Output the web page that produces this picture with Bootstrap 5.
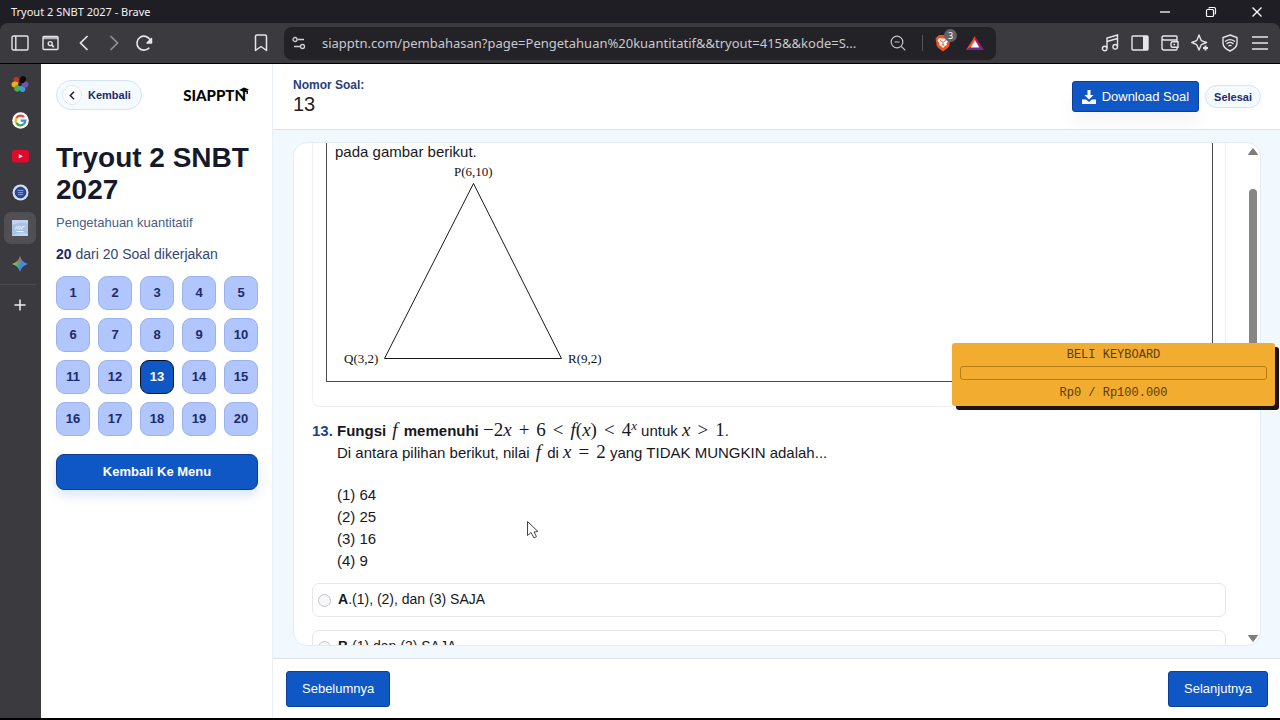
<!DOCTYPE html>
<html lang="id">
<head>
<meta charset="utf-8">
<meta name="viewport" content="width=device-width, initial-scale=1">
<title>Tryout 2 SNBT 2027</title>
<link href="https://cdn.jsdelivr.net/npm/bootstrap@5.3.0/dist/css/bootstrap.min.css" rel="stylesheet">
<style>
:root { --blue:#0f57c4; --navy:#1c2b6b; --line:#d9e2ee; }
body { font-family:"Liberation Sans",Arial,sans-serif; font-size:15px; line-height:22px; color:#16181d; background:#000; overflow:hidden; }
button { font-family:inherit; }
svg { display:block; flex:none; }
.os-font { font-family:"Noto Sans","Open Sans",sans-serif; }
.screen { padding-bottom:2px; }

/* browser chrome */
.titlebar { height:23px; background:#1f1e24; color:#f2f2f4; font-size:11px; line-height:23px; padding-left:11px; }
.win-btn { width:46px; height:23px; background:none; border:0; color:#fff; padding:0; }
.toolbar { height:40px; background:#3b3a3f; color:#e6e6ea; border-radius:8px 8px 0 0; }
.toolbar-wrap { background:#1f1e24; border-bottom:1px solid #000; }
.tool { width:30px; height:30px; border:0; padding:0; background:none; color:inherit; display:flex; align-items:center; justify-content:center; flex:none; }
.tools-start { width:276px; padding-left:5px; }
.tools-end { width:284px; padding-right:5px; }
.address { height:33px; background:#232227; border-radius:8px; padding:0 6px 0 8px; }
.address input { background:none; border:0; color:#c9c9cd; font-size:13px; min-width:0; padding:0; outline:0; text-overflow:ellipsis; }
.sep { width:1px; height:16px; background:#55545a; margin:0 5px 0 16px; }
.shield { margin-right:2px; }
.shield-count { top:1px; right:1px; width:13px; height:13px; border-radius:50%; background:#626268; color:#fff; font-size:9px; line-height:13px; }
.rail { width:41px; background:#3b3a3f; padding-top:2px; flex:none; }
.rail-btn { width:32px; height:32px; margin:2px 0 2px 4px; border:0; border-radius:7px; padding:0; background:none; display:flex; align-items:center; justify-content:center; color:#eee; flex:none; }
.rail-btn.active { background:#504f54; }
.rail-line { height:1px; background:#4b4a4f; margin:2px 5px 2px 0; }

/* sidebar */
.side { width:232px; background:#fff; border-right:1px solid #eaf0f6; padding:16px 14px 0 15px; flex:none; }
.pill { border:1px solid #d3e3f4; background:#f5faff; border-radius:20px; color:var(--navy); font-size:11px; font-weight:700; line-height:16px; }
.pill-back { height:30px; padding:0 10px 0 5px; gap:6px; }
.pill-dot { width:20px; height:20px; border-radius:50%; border:1px solid #dfe8f2; background:#fff; display:flex; align-items:center; justify-content:center; }
.brand-word { font-family:Lato,sans-serif; font-weight:900; font-size:15px; line-height:20px; color:#050505; }
.brand-cap { top:2px; right:-3px; }
.side h1 { font-size:28px; line-height:32px; font-weight:700; color:#15192a; margin:32px 0 0; }
.subtitle { font-size:13px; line-height:18px; color:#46608a; margin:8px 0 0; }
.progress-note { font-size:14px; line-height:20px; color:#34476e; margin:12px 0 12px; }
.progress-note b { color:var(--navy); }
.num-grid { display:grid; grid-template-columns:repeat(5,1fr); gap:8px; }
.num { height:34px; border:1px solid #9ab3ee; border-radius:9px; background:#b0c6fc; color:var(--navy); font-size:13px; font-weight:700; line-height:16px; padding:0; }
.num.active { background:var(--blue); border-color:#02102e; color:#fff; }
.btn-site { --bs-btn-bg:var(--blue); --bs-btn-color:#fff; --bs-btn-border-color:#0b3f9b; --bs-btn-hover-bg:#0b4bac; --bs-btn-hover-color:#fff; --bs-btn-font-size:13px; --bs-btn-border-radius:3px; --bs-btn-padding-x:15px; --bs-btn-padding-y:0; height:36px; }
.btn-menu { --bs-btn-border-radius:8px; margin-top:18px; font-weight:700; box-shadow:0 5px 12px rgba(15,87,196,.16); }

/* question area */
.top { height:66px; background:#fff; border-bottom:1px solid var(--line); padding:0 19px 0 20px; }
.top-label { font-size:12px; line-height:14px; font-weight:700; color:#27407c; }
.top-num { font-size:20px; line-height:24px; color:#222; }
.top-actions, .btn-save { gap:6px; }
.btn-save { height:31px; --bs-btn-padding-x:9px; box-shadow:0 12px 18px rgba(0,0,0,.04); }
.pill-done { height:23px; padding:0 8px; }
.stage { background:#f1f8fe; padding:12px 19px 12px 20px; min-height:0; }
.sheet { background:#fff; border:1px solid #e3edf6; border-radius:14px; overflow:hidden; height:100%; }
.sheet-body { padding:0 20px 0 18px; min-width:0; overflow:hidden; }
.passage { border:1px solid #edf0f4; border-top:0; border-radius:0 0 8px 8px; padding:0 12px 24px 13px; }
.passage-frame { border:1px solid #4a4a4a; border-top:0; padding-left:8px; line-height:18px; }
.passage-frame text { font-family:"Liberation Serif",serif; font-size:13px; fill:#111; }
.question { margin-top:13px; }
.q-no { width:25px; font-weight:700; color:#1f3f93; flex:none; }
.mx { font-family:"Liberation Serif",serif; font-size:19px; font-weight:400; line-height:1px; white-space:nowrap; }
i.mx { margin:0 2px; }
.mx .op { margin:0 7px; }
.mx sup { font-size:13px; top:-6px; line-height:0; }
.statements { margin:20px 0 11px; }
.choice { height:34px; border:1px solid #e4e7ec; border-radius:7px; padding:0 5px 2px; font-size:14px; line-height:20px; margin-bottom:13px; }
.choice input { width:13px; height:13px; margin:2px 7px 0 0; border-color:#c3c6cb; background-color:#f7f7f8; flex:none; }
.track { width:14px; padding:5px 0 3px; flex:none; }
.track-thumb { width:8px; height:180px; margin-top:34px; border-radius:4px; background:#868686; }
.foot { height:60px; background:#fff; border-top:1px solid var(--line); padding:0 12px 0 13px; }

/* overlays */
.goal { right:5px; bottom:314px; width:323px; height:63px; background:#f2ad30; border-radius:3px; box-shadow:4px 4px 0 #1d1214; font-family:"Liberation Mono",monospace; font-size:12px; line-height:16px; color:#5b3a08; padding:4px 8px; text-align:center; }
.goal-bar { height:14px; border:1px solid #b57c13; border-radius:3px; margin:3px 0 5px; }
.pointer { left:526px; top:520px; }
</style>
</head>
<body>
<div class="screen vh-100 d-flex flex-column position-relative">
  <div class="titlebar os-font d-flex justify-content-between">
    <span>Tryout 2 SNBT 2027 - Brave</span>
    <div class="d-flex">
      <button class="win-btn" aria-label="Minimize"><svg class="mx-auto" width="12" height="12" viewBox="0 0 12 12"><path d="M1 6h10" stroke="#fff" stroke-width="1.3"/></svg></button>
      <button class="win-btn" aria-label="Restore"><svg class="mx-auto" width="12" height="12" viewBox="0 0 12 12" fill="none" stroke="#fff" stroke-width="1.2"><rect x="1.5" y="3.5" width="7" height="7" rx="1"/><path d="M4 2.6Q4 1.5 5 1.5h4q1.500 0 1.500 1.500v4q0 1-1 1"/></svg></button>
      <button class="win-btn" aria-label="Close"><svg class="mx-auto" width="12" height="12" viewBox="0 0 12 12"><path d="M1.500 1.500l9 9m0-9l-9 9" stroke="#fff" stroke-width="1.3"/></svg></button>
    </div>
  </div>
  <div class="toolbar-wrap">
    <div class="toolbar d-flex align-items-center">
      <div class="tools-start d-flex flex-shrink-0">
        <button class="tool" aria-label="Sidebar"><svg width="18" height="16" viewBox="0 0 18 16" fill="none" stroke="currentColor" stroke-width="1.400"><rect x="1" y="1" width="16" height="14" rx="1.500"/><path d="M4.800 1v14"/></svg></button>
        <button class="tool" aria-label="Search tabs"><svg width="17" height="16" viewBox="0 0 17 16" fill="none" stroke="currentColor" stroke-width="1.400"><rect x="1" y="1.500" width="15" height="13" rx="1"/><path d="M1 3h15" stroke-width="2.500" opacity=".7"/><circle cx="8.200" cy="8.600" r="2"/><path d="M9.800 10.200l2 2" stroke-width="1.700"/></svg></button>
        <button class="tool ms-1" aria-label="Back"><svg width="12" height="16" viewBox="0 0 12 16" fill="none" stroke="currentColor" stroke-width="1.700"><path d="M9.500 1L2.500 8l7 7"/></svg></button>
        <button class="tool opacity-50" aria-label="Forward"><svg width="12" height="16" viewBox="0 0 12 16" fill="none" stroke="currentColor" stroke-width="1.700"><path d="M2.500 1l7 7-7 7"/></svg></button>
        <button class="tool" aria-label="Reload"><svg width="18" height="18" viewBox="0 0 18 18"><path d="M15.200 6A7 7 0 1 0 14.300 13.700" fill="none" stroke="currentColor" stroke-width="1.600"/><path d="M16.500 4.500v4.500h-4.500z" fill="currentColor" stroke="currentColor" stroke-width="1.500" stroke-linejoin="round"/></svg></button>
        <button class="tool ms-auto" aria-label="Bookmark"><svg width="14" height="18" viewBox="0 0 14 18" fill="none" stroke="currentColor" stroke-width="1.500" stroke-linejoin="round"><path d="M1.500 2.500Q1.500 1 3 1h8q1.500 0 1.500 1.500V16.500L7 12.500l-5.500 4z"/></svg></button>
      </div>
      <div class="address os-font flex-grow-1 d-flex align-items-center ms-2">
        <svg class="me-3" width="14" height="14" viewBox="0 0 14 14" fill="none" stroke="#d0d0d4" stroke-width="1.300"><circle cx="3" cy="3.500" r="2"/><path d="M5.500 3.500H12M2 10.500h6"/><circle cx="10.500" cy="10.500" r="2"/></svg>
        <input class="flex-grow-1 me-1" aria-label="Alamat" value="siapptn.com/pembahasan?page=Pengetahuan%20kuantitatif&amp;&amp;tryout=415&amp;&amp;kode=S...">
        <svg width="16" height="16" viewBox="0 0 16 16" fill="none" stroke="#c4c4c8" stroke-width="1.200"><circle cx="7" cy="7" r="5.800"/><path d="M4.500 7h5M11.300 11.300l4 4"/></svg>
        <span class="sep"></span>
        <button class="tool shield position-relative" aria-label="Brave Shields"><svg width="16" height="18" viewBox="0 0 16 18"><path d="M4 1h8l2 2 1.500 1-1 7q-.5 2-2.500 3.500L8 17.500 4 14.500q-2-1.500-2.500-3.500l-1-7L2 3z" fill="#f1501f"/><path d="M4 4l2.500.5h3L12 4l1.500 2.500-2 3 .5 1.500-2 1-2 2-2-2-2-1 .5-1.500-2-3z" fill="#fff"/><path d="M5 6.500l2 1m4-1l-2 1M8 7v4m-1.500 0h3" stroke="#f1501f"/></svg><span class="shield-count position-absolute">3</span></button>
        <button class="tool" aria-label="Rewards"><svg width="18" height="16" viewBox="0 0 18 16"><path d="M9 1L9 6 4.500 13 0 15z" fill="#ff4724"/><path d="M9 1l9 14-5-2L9 6z" fill="#9e1f63"/><path d="M0 15l4.500-3h9l4.500 3z" fill="#662d91"/><path d="M9 5l4.300 7.500H4.700z" fill="#fff"/></svg></button>
      </div>
      <div class="tools-end d-flex flex-shrink-0 justify-content-end">
        <button class="tool" aria-label="Playlist"><svg width="18" height="18" viewBox="0 0 18 18" fill="none" stroke="currentColor" stroke-width="1.400"><path d="M6 14V4l10.500-3v11.500M6 7.500l10.500-3"/><circle cx="3.700" cy="14.500" r="2.300"/><circle cx="14.200" cy="12.800" r="2.300"/></svg></button>
        <button class="tool" aria-label="Side panel"><svg width="18" height="16" viewBox="0 0 18 16"><rect x="1" y="1" width="16" height="14" rx="1" fill="none" stroke="currentColor" stroke-width="1.400"/><path d="M12 1h5v14h-5z" fill="currentColor"/></svg></button>
        <button class="tool" aria-label="Wallet"><svg width="18" height="16" viewBox="0 0 18 16" fill="none" stroke="currentColor" stroke-width="1.400"><path d="M16 6V2Q16 1 15 1H2.500Q1 1 1 2.500V13q0 2 2 2h12q1 0 1-1v-1.500M1 3.500Q1 5 3 5h13"/><path d="M17 6.800h-5.500q-1.500 0-1.500 1.400v2.500q0 1.500 1.500 1.500H17z"/><path d="M12.500 9.500h1.500"/></svg></button>
        <button class="tool" aria-label="Leo AI"><svg width="18" height="18" viewBox="0 0 18 18" fill="none" stroke="currentColor" stroke-width="1.400" stroke-linejoin="round"><path d="M8 1l2 5q.2.600.800.800L15.500 8.500 11 10.300q-.8.300-1 .9L8 16l-2-4.800q-.3-.6-.9-.9L.8 8.500l4.300-1.700q.6-.2.900-.8z"/><path d="M14.500 11.500v5M12 14h5" stroke-width="2"/></svg></button>
        <button class="tool" aria-label="VPN"><svg width="16" height="18" viewBox="0 0 16 18" fill="none" stroke="currentColor" stroke-width="1.400"><path d="M8 1l7 2.500V9q0 5-7 8-7-3-7-8V3.500z"/><path d="M3.500 7.200q4.500-3.200 9 0M5 9.500q3-2.200 6 0M7 11.700q1-.6 2 0" stroke-linecap="round"/></svg></button>
        <button class="tool" aria-label="Menu"><svg width="16" height="14" viewBox="0 0 16 14"><path d="M0 1h16M0 7h16M0 13h16" stroke="currentColor" stroke-width="1.400"/></svg></button>
      </div>
    </div>
  </div>

  <div class="d-flex flex-grow-1" style="min-height:0">
    <nav class="rail d-flex flex-column" aria-label="Tab">
      <button class="rail-btn" aria-label="Tab foto"><svg width="18" height="18" viewBox="0 0 18 18"><g><ellipse cx="9" cy="4" rx="3" ry="3.500" fill="#c0332b" transform="rotate(-40 9 9)"/><ellipse cx="9" cy="4" rx="3" ry="3.500" fill="#e8b21c" transform="rotate(-95 9 9)"/><ellipse cx="9" cy="4" rx="3" ry="3.500" fill="#47b04b" transform="rotate(-150 9 9)"/><ellipse cx="9" cy="4" rx="3" ry="3.500" fill="#3aa0d8" transform="rotate(155 9 9)"/><ellipse cx="9" cy="4" rx="3" ry="3.500" fill="#7454a8" transform="rotate(95 9 9)"/><ellipse cx="9" cy="4" rx="3" ry="3.800" fill="#0b0b0d" transform="rotate(32 9 9)"/><circle cx="9" cy="9.500" r="1.800" fill="#222"/></g></svg></button>
      <button class="rail-btn" aria-label="Google"><svg width="17" height="17" viewBox="0 0 17 17"><circle cx="8.500" cy="8.500" r="8.300" fill="#fff"/><g fill="none" stroke-width="2.300"><path d="M12 5A4.900 4.900 0 0 0 4.300 6.200" stroke="#ea4335"/><path d="M4.300 6.200a4.900 4.900 0 0 0 0 4.700" stroke="#fbbc05"/><path d="M4.300 10.900A4.900 4.900 0 0 0 11.700 12.200" stroke="#34a853"/><path d="M11.700 12.200A4.900 4.900 0 0 0 13.300 8.600H8.700" stroke="#4285f4"/></g></svg></button>
      <button class="rail-btn" aria-label="YouTube"><svg width="17" height="13" viewBox="0 0 17 13"><rect width="17" height="12.500" rx="3" fill="#e10a2e"/><path d="M6.800 4l4 2.300-4 2.300z" fill="#fff"/></svg></button>
      <button class="rail-btn" aria-label="Kampus"><svg width="17" height="17" viewBox="0 0 17 17"><circle cx="8.500" cy="8.500" r="8" fill="#cfdcf3"/><circle cx="8.500" cy="8.500" r="5.300" fill="#2b4a9c"/><path d="M5.500 6.500h6M6 8.500h5M6 10.500h5" stroke="#7f99d4"/><circle cx="8.500" cy="8.500" r="5.300" fill="none" stroke="#1c3478"/></svg></button>
      <button class="rail-btn active" aria-label="Tryout 2 SNBT 2027"><svg width="16" height="16" viewBox="0 0 16 16"><rect width="16" height="16" fill="#a9c1e3"/><path d="M0 5Q8 1 16 4V0H0zM0 16q9-6 16-2v2z" fill="#bfd3ee"/><path d="M3.500 9.500l1-3m1 3l1-3h1m0 3l1-3m1 3l1-3h2m-8 5h7" stroke="#edf4ff" fill="none"/></svg></button>
      <button class="rail-btn" aria-label="Gemini"><svg width="16" height="16" viewBox="0 0 16 16"><defs><linearGradient id="gm" x1="0" y1="0.300" x2="1" y2="0.600"><stop offset="0" stop-color="#f2c230"/><stop offset=".35" stop-color="#5fae6a"/><stop offset=".6" stop-color="#3f86ea"/><stop offset="1" stop-color="#4a8bf0"/></linearGradient></defs><path d="M8 0q1.500 6 8 8-6.500 2-8 8-1.500-6-8-8 6.500-2 8-8z" fill="url(#gm)"/><path d="M8 0q1 4 3 6H5Q7 4 8 0z" fill="#e0574a" opacity=".6"/></svg></button>
      <div class="rail-line"></div>
      <button class="rail-btn" aria-label="Tab baru"><svg width="12" height="12" viewBox="0 0 12 12"><path d="M6 .5v11M.5 6h11" stroke="currentColor" stroke-width="1.500"/></svg></button>
    </nav>

    <aside class="side">
      <div class="d-flex align-items-center justify-content-between pe-2">
        <button class="pill pill-back d-flex align-items-center"><span class="pill-dot"><svg width="6" height="9" viewBox="0 0 6 9"><path d="M5 .8L1.300 4.500 5 8.200" fill="none" stroke="#1b2440" stroke-width="1.500"/></svg></span>Kembali</button>
        <span class="brand-word position-relative me-1">SIAPPTN<svg class="brand-cap position-absolute" width="10" height="8" viewBox="0 0 10 8"><path d="M0 3L5 .5 10 2.500 6 4.500 9 3.500V6.500L7.500 7.500V5L5 5z" fill="#050505"/></svg></span>
      </div>
      <h1>Tryout 2 SNBT 2027</h1>
      <p class="subtitle">Pengetahuan kuantitatif</p>
      <p class="progress-note"><b>20</b> dari 20 Soal dikerjakan</p>
      <div class="num-grid">
        <button class="num">1</button><button class="num">2</button><button class="num">3</button><button class="num">4</button><button class="num">5</button>
        <button class="num">6</button><button class="num">7</button><button class="num">8</button><button class="num">9</button><button class="num">10</button>
        <button class="num">11</button><button class="num">12</button><button class="num active" aria-current="true">13</button><button class="num">14</button><button class="num">15</button>
        <button class="num">16</button><button class="num">17</button><button class="num">18</button><button class="num">19</button><button class="num">20</button>
      </div>
      <button class="btn btn-site btn-menu w-100">Kembali Ke Menu</button>
    </aside>

    <main class="flex-grow-1 d-flex flex-column" style="min-width:0">
      <header class="top d-flex align-items-center justify-content-between flex-shrink-0">
        <div>
          <div class="top-label">Nomor Soal:</div>
          <div class="top-num">13</div>
        </div>
        <div class="top-actions d-flex align-items-center">
          <button class="btn btn-site btn-save d-flex align-items-center"><svg width="14" height="14" viewBox="0 0 14 14" fill="#fff"><path d="M5.500 0h3v5h3L7 9.500 2.500 5h3z"/><path d="M0 9.500h4.200L7 12l2.800-2.500H14V14H0z"/></svg>Download Soal</button>
          <button class="pill pill-done">Selesai</button>
        </div>
      </header>

      <section class="stage flex-grow-1">
        <div class="sheet d-flex">
          <div class="sheet-body flex-grow-1">
            <div class="passage">
              <div class="passage-frame">
                pada gambar berikut.
                <svg width="280" height="220" viewBox="0 0 280 220" role="img" aria-label="Segitiga PQR">
                  <path d="M138.500 22.500L49.500 197.500h177z" fill="none" stroke="#1a1a1a"/>
                  <text x="119" y="15">P(6,10)</text><text x="9" y="202">Q(3,2)</text><text x="233" y="202">R(9,2)</text>
                </svg>
              </div>
            </div>
            <div class="question d-flex">
              <div class="q-no">13.</div>
              <div>
                <div><b>Fungsi <i class="mx">f</i> memenuhi</b> <span class="mx">−2<i>x</i><span class="op">+</span>6<span class="op">&lt;</span><i>f</i>(<i>x</i>)<span class="op">&lt;</span>4<sup><i>x</i></sup></span> untuk <span class="mx"><i>x</i><span class="op">&gt;</span>1</span>.</div>
                <div>Di antara pilihan berikut, nilai <i class="mx">f</i> di <span class="mx"><i>x</i><span class="op">=</span>2</span> yang TIDAK MUNGKIN adalah...</div>
                <div class="statements">(1) 64<br>(2) 25<br>(3) 16<br>(4) 9</div>
              </div>
            </div>
            <label class="choice d-flex align-items-center"><input class="form-check-input" type="radio" name="jawaban"><span><b>A</b>.(1), (2), dan (3) SAJA</span></label>
            <label class="choice d-flex align-items-center"><input class="form-check-input" type="radio" name="jawaban"><span><b>B</b>.(1) dan (3) SAJA</span></label>
          </div>
          <div class="track d-flex flex-column align-items-center">
            <svg width="10" height="7" viewBox="0 0 10 7"><path d="M5 .5l4.500 6h-9z" fill="#7d7d7d" stroke="#7d7d7d" stroke-linejoin="round"/></svg>
            <div class="track-thumb"></div>
            <svg class="mt-auto" width="10" height="7" viewBox="0 0 10 7"><path d="M5 6.500L.5.500h9z" fill="#7d7d7d" stroke="#7d7d7d" stroke-linejoin="round"/></svg>
          </div>
        </div>
      </section>

      <footer class="foot d-flex align-items-center justify-content-between flex-shrink-0">
        <button class="btn btn-site">Sebelumnya</button>
        <button class="btn btn-site">Selanjutnya</button>
      </footer>
    </main>
  </div>

  <div class="goal position-absolute">
    <div>BELI KEYBOARD</div>
    <div class="goal-bar" role="progressbar" aria-label="BELI KEYBOARD" aria-valuenow="0" aria-valuemin="0" aria-valuemax="100000"></div>
    <div>Rp0 / Rp100.000</div>
  </div>
  <svg class="pointer position-absolute" width="14" height="20" viewBox="0 0 14 20"><path d="M1.500 1.500v14l3.500-3 3 5.500 2.500-1.500-2.500-4.500 4-.5z" fill="#fff" stroke="#444" stroke-linejoin="round"/></svg>
</div>
<script src="https://cdn.jsdelivr.net/npm/bootstrap@5.3.0/dist/js/bootstrap.bundle.min.js"></script>
</body>
</html>
